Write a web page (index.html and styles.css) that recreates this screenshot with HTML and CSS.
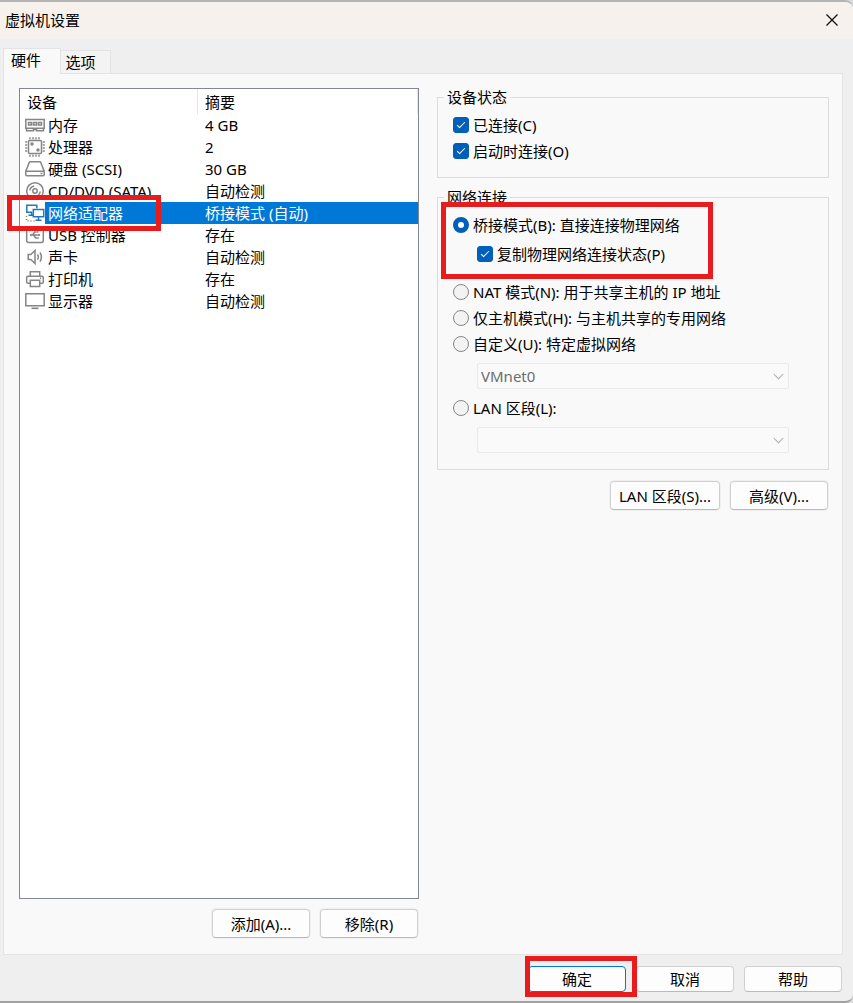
FILE: index.html
```html
<!DOCTYPE html>
<html lang="zh">
<head>
    <meta charset="UTF-8">
    <meta name="viewport" content="width=device-width, initial-scale=1.0">
    <title>虚拟机设置</title>
    <link rel="stylesheet" href="styles.css">
</head>
<body>
    <div class="dialog">
        <header class="title-bar">
            <h1>虚拟机设置</h1>
            <button type="button" class="btn-close" aria-label="关闭">
                <svg width="12" height="12" viewBox="0 0 12 12"><path d="M.5.5l11 11M11.5.5l-11 11" fill="none" stroke="#111" stroke-width="1.3"/></svg>
            </button>
        </header>

        <div class="tabs" role="tablist">
            <button type="button" class="tab active" role="tab" aria-selected="true">硬件</button>
            <button type="button" class="tab" role="tab" aria-selected="false">选项</button>
        </div>

        <main class="panel">
            <!-- 设备列表 -->
            <section class="devices">
                <div class="device-list">
                    <table>
                        <colgroup>
                            <col class="col-icon">
                            <col class="col-name">
                            <col>
                        </colgroup>
                        <thead>
                            <tr><th colspan="2">设备</th><th>摘要</th></tr>
                        </thead>
                        <tbody>
                            <tr>
                                <td class="icon"><svg width="20" height="20" viewBox="0 0 20 20"><path d="M.8 4.5h18.4v8.8H.8zM1.5 13.3v2.4h7v-1.2h3v1.2h7v-2.4"/><path d="M3.5 7.5h3v2.4h-3zM8.5 7.5h3v2.4h-3zM13.5 7.5h3v2.4h-3z"/></svg></td>
                                <td>内存</td><td>4 GB</td>
                            </tr>
                            <tr>
                                <td class="icon"><svg width="20" height="20" viewBox="0 0 20 20"><rect x="3.5" y="3.5" width="13" height="13" rx="1"/><circle cx="7" cy="7" r="1"/><circle cx="13" cy="13" r="1"/><path d="M5 .2v2M8 .2v2M11 .2v2M14 .2v2M5 17.8v2M8 17.8v2M11 17.8v2M14 17.8v2M.2 5h2M.2 8h2M.2 11h2M.2 14h2M17.8 5h2M17.8 8h2M17.8 11h2M17.8 14h2"/></svg></td>
                                <td>处理器</td><td>2</td>
                            </tr>
                            <tr>
                                <td class="icon"><svg width="20" height="20" viewBox="0 0 20 20"><path d="M.8 12.2l3.4-8.6q.3-.8 1-.8h9.6q.7 0 1 .8l3.4 8.6v3.6q0 1-1 1H1.8q-1 0-1-1zM.8 12.2h18.4M15.5 14.5h2"/></svg></td>
                                <td>硬盘 (SCSI)</td><td>30 GB</td>
                            </tr>
                            <tr>
                                <td class="icon"><svg width="20" height="20" viewBox="0 0 20 20"><circle cx="10" cy="10" r="8.3"/><circle cx="10" cy="10" r="2.2"/><path d="M4.8 9.5q.5-3.8 4.4-4.6M15.2 10.5q-.5 3.8-4.4 4.6"/></svg></td>
                                <td>CD/DVD (SATA)</td><td>自动检测</td>
                            </tr>
                            <tr class="selected">
                                <td class="icon"><svg width="20" height="20" viewBox="0 0 20 20"><path d="M7 9.2H1.8v-7h10v3M6.5 9.2v3M3.5 12.2H8M8.3 6.4h10.4v7.4H8.3zM13.5 13.8v3.2M10.5 17.2h6" stroke="#2478b8"/><path d="M1.5 13v5h9" stroke-dasharray="1 2"/></svg></td>
                                <td>网络适配器</td><td>桥接模式 (自动)</td>
                            </tr>
                            <tr>
                                <td class="icon"><svg width="20" height="20" viewBox="0 0 20 20"><rect x="1.7" y="2.2" width="16.6" height="15.4" rx="2"/><path d="M5 10h10M7.5 10l2.2-3h2M8.5 10l2.2 3h2"/><path d="M4.5 10l2.2-1.6v3.2zM15.5 10l-2-1.2v2.4zM12 6.3h1.4v1.4H12zM12.5 12.3h1.4v1.4h-1.4z" fill="#8a8a8a" stroke="none"/></svg></td>
                                <td>USB 控制器</td><td>存在</td>
                            </tr>
                            <tr>
                                <td class="icon"><svg width="20" height="20" viewBox="0 0 20 20"><path d="M3.2 7.5h2.6l4.2-4v13l-4.2-4H3.2zM12.5 7.3q1.6 2.7 0 5.4M15 5.3q2.8 4.7 0 9.4"/></svg></td>
                                <td>声卡</td><td>自动检测</td>
                            </tr>
                            <tr>
                                <td class="icon"><svg width="20" height="20" viewBox="0 0 20 20"><path d="M5.3 7.2V2.8h9.4v4.4M5.3 14.2H3q-1.3 0-1.3-1.3V8.5q0-1.3 1.3-1.3h14q1.3 0 1.3 1.3v4.4q0 1.3-1.3 1.3h-2.3M5.3 11.2h9.4v6.3H5.3zM15 9.3h1.2"/></svg></td>
                                <td>打印机</td><td>存在</td>
                            </tr>
                            <tr>
                                <td class="icon"><svg width="20" height="20" viewBox="0 0 20 20"><path d="M.8 2.8h18.4v12H.8z"/><path d="M6.5 17.3h7" stroke-width="1.6"/></svg></td>
                                <td>显示器</td><td>自动检测</td>
                            </tr>
                        </tbody>
                    </table>
                </div>
                <div class="actions">
                    <button type="button" class="btn">添加(A)...</button>
                    <button type="button" class="btn">移除(R)</button>
                </div>
            </section>

            <!-- 网络适配器设置 -->
            <form class="settings">
                <fieldset class="status">
                    <legend>设备状态</legend>
                    <label class="option"><input type="checkbox" checked>已连接(C)</label>
                    <label class="option"><input type="checkbox" checked>启动时连接(O)</label>
                </fieldset>

                <fieldset class="network">
                    <legend>网络连接</legend>
                    <div class="bridge">
                        <label class="option"><input type="radio" name="net" checked>桥接模式(B): 直接连接物理网络</label>
                        <label class="option sub"><input type="checkbox" checked>复制物理网络连接状态(P)</label>
                    </div>
                    <label class="option"><input type="radio" name="net">NAT 模式(N): 用于共享主机的 IP 地址</label>
                    <label class="option"><input type="radio" name="net">仅主机模式(H): 与主机共享的专用网络</label>
                    <label class="option"><input type="radio" name="net">自定义(U): 特定虚拟网络</label>
                    <div class="select-wrap">
                        <select aria-label="特定虚拟网络" disabled><option>VMnet0</option></select>
                    </div>
                    <label class="option"><input type="radio" name="net">LAN 区段(L):</label>
                    <div class="select-wrap">
                        <select aria-label="LAN 区段" disabled><option></option></select>
                    </div>
                </fieldset>

                <div class="actions">
                    <button type="button" class="btn btn-wide">LAN 区段(S)...</button>
                    <button type="button" class="btn">高级(V)...</button>
                </div>
            </form>
        </main>

        <footer class="footer">
            <span class="ok-mark"><button type="button" class="btn btn-ok">确定</button></span>
            <button type="button" class="btn">取消</button>
            <button type="button" class="btn">帮助</button>
        </footer>
    </div>
</body>
</html>
```
FILE: styles.css
```css
*, *::before, *::after {
    margin: 0;
    padding: 0;
    box-sizing: border-box;
}

body {
    background: #dcdcdc;
    color: #000;
}

body, button, select {
    font-family: "Noto Sans", "Noto Sans CJK SC", sans-serif;
    font-size: 15px;
    line-height: 18px;
}

.dialog {
    min-height: 100vh;
    display: flex;
    flex-direction: column;
    background: #efefef;
    border-top: 2px solid #b4b4b4;
    border-bottom: 2px solid #a0a0a0;
    border-radius: 0 8px 8px 0;
}

/* 标题栏 */
.title-bar {
    height: 37px;
    padding: 0 15px 2px 5px;
    display: flex;
    align-items: center;
    justify-content: space-between;
    background: #f7f1ee;
    border-top-right-radius: 8px;
}

.title-bar h1 {
    font-size: 15px;
    font-weight: normal;
}

.btn-close {
    display: flex;
    border: none;
    background: none;
}

/* 选项卡 */
.tabs {
    display: flex;
    align-items: flex-end;
    padding: 9px 3px 0;
}

.tab {
    width: 50px;
    height: 23px;
    padding-right: 10px;
    background: #f3f3f3;
    border: 1px solid #e3e3e3;
    border-left: none;
    border-bottom: none;
}

.tab.active {
    position: relative;
    width: 58px;
    height: 26px;
    padding: 0 12px 3px 0;
    margin-bottom: -1px;
    background: #f9f9f9;
    border-left: 1px solid #e3e3e3;
}

.panel {
    flex: 1;
    display: flex;
    gap: 18px;
    margin: 0 10px 0 3px;
    padding: 14px 13px 16px 15px;
    background: #f9f9f9;
    border: 1px solid #e3e3e3;
}

.devices {
    flex: 400;
    display: flex;
    flex-direction: column;
    gap: 10px;
}

.device-list {
    flex: 1;
    background: #fff;
    border: 1px solid #828790;
}

table {
    width: 100%;
    border-spacing: 0;
    table-layout: fixed;
}

.col-icon {
    width: 25px;
}

.col-name {
    width: 153px;
}

th {
    height: 25px;
    padding-left: 7px;
    text-align: left;
    font-weight: normal;
    border-right: 1px solid #e5e5e5;
}

td {
    height: 22px;
    padding-left: 7px;
}

td:nth-child(2) {
    padding-left: 3px;
    white-space: nowrap;
}

td.icon {
    position: relative;
    padding-left: 5px;
}

.icon svg {
    display: block;
    fill: none;
    stroke: #858585;
    stroke-width: 1.5;
}

.selected td:not(.icon) {
    background: #0078d7;
    color: #fff;
}

/* 红色标记框 */
.selected .icon::after,
.bridge::after,
.ok-mark::after {
    content: "";
    position: absolute;
    z-index: 1;
    border: 5px solid #e81c1c;
    pointer-events: none;
}

.selected .icon::after {
    top: -7px;
    left: -13px;
    width: 154px;
    height: 36px;
}

.actions {
    display: flex;
    justify-content: flex-end;
    gap: 10px;
    padding-right: 1px;
}

.btn {
    width: 98px;
    height: 29px;
    background: #fdfdfd;
    border: 1px solid #d0d0d0;
    border-bottom-color: #bababa;
    border-radius: 4px;
    box-shadow: 0 0 0 1px #f0f0f0;
    white-space: nowrap;
}

.btn-wide {
    width: 110px;
}

/* 右侧设置 */
.settings {
    flex: 392;
    display: flex;
    flex-direction: column;
    gap: 10px;
}

.settings .actions {
    padding-top: 1px;
}

fieldset {
    min-width: 0;
    padding: 6px 15px 13px;
    border: 1px solid #dcdcdc;
}

legend {
    margin-left: -9px;
    padding: 0 3px;
}

.network {
    padding-bottom: 16px;
}

.option {
    display: flex;
    align-items: center;
    gap: 4px;
    height: 26px;
    white-space: nowrap;
}

.bridge {
    position: relative;
    margin-bottom: 12px;
}

.bridge::after {
    top: -10px;
    left: -12px;
    width: 272px;
    height: 77px;
}

.sub {
    margin: 3px 0 0 24px;
}

.option input {
    appearance: none;
    flex: none;
    width: 16px;
    height: 16px;
    border: 1px solid #868686;
    background: #f3f3f3;
}

input[type="radio"] {
    border-radius: 50%;
}

.option input[type="radio"]:checked {
    border: 5px solid #005fb8;
    background: #fff;
}

input[type="checkbox"] {
    display: flex;
    justify-content: center;
    border-radius: 3px;
}

.option input[type="checkbox"]:checked {
    border-color: #005fb8;
    background: #005fb8;
}

/* 对勾 */
input[type="checkbox"]:checked::before {
    content: "";
    width: 4px;
    height: 8px;
    margin-top: 2px;
    border: solid #fff;
    border-width: 0 1px 1px 0;
    transform: rotate(45deg);
}

.select-wrap {
    position: relative;
    margin: 6px 24px;
}

.select-wrap:last-child {
    margin-bottom: 0;
}

select {
    appearance: none;
    display: block;
    width: 100%;
    height: 26px;
    padding-left: 3px;
    color: #6d6d6d;
    background: #fafafa;
    border: 1px solid #eaeaea;
    border-radius: 2px;
    opacity: 1;
}

.select-wrap::after {
    content: "";
    position: absolute;
    top: 8px;
    right: 7px;
    width: 7px;
    height: 7px;
    border: solid #b0b0b0;
    border-width: 0 1px 1px 0;
    transform: rotate(45deg);
}

/* 底部按钮 */
.footer {
    display: flex;
    justify-content: flex-end;
    gap: 10px;
    padding: 11px 11px 9px;
}

.footer .btn {
    height: 26px;
    box-shadow: none;
}

.ok-mark {
    position: relative;
}

.ok-mark::after {
    top: -10px;
    left: -3px;
    width: 112px;
    height: 41px;
}

.footer .btn-ok {
    display: block;
    border-color: #0078d4;
}
```
